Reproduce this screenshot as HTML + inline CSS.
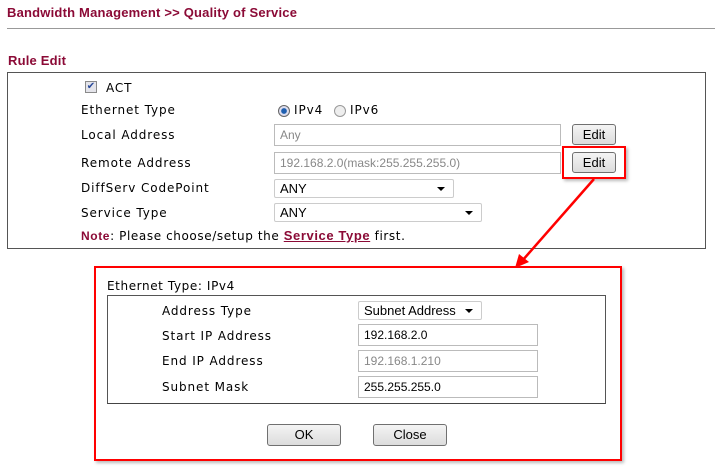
<!DOCTYPE html>
<html><head><style>
body{margin:0;width:715px;height:474px;background:#fff;position:relative;font-family:"DejaVu Sans",sans-serif;font-size:12px;color:#000;overflow:hidden}
.a{position:absolute;white-space:nowrap;letter-spacing:0.9px}
.t{font-family:"Liberation Sans",sans-serif;font-weight:bold;color:#8b0a36;font-size:13px;letter-spacing:0.2px}
.in{position:absolute;border:1px solid #bbb;background:#fff;box-sizing:border-box;font-family:"Liberation Sans",sans-serif;font-size:12px;padding:3px 5px;line-height:14px;color:#000}
.g{color:#888}
.btn{position:absolute;box-sizing:border-box;border:1px solid #707070;border-radius:3px;background:linear-gradient(#f4f4f4,#dcdcdc);text-align:center;font-family:"Liberation Sans",sans-serif;font-size:13px;line-height:19px}
.sel{position:absolute;box-sizing:border-box;border:1px solid #ccc;border-radius:2px;background:#fff;font-family:"Liberation Sans",sans-serif;font-size:13px;padding:1px 5px;line-height:15px}
.sel:after{content:"";position:absolute;right:8px;top:7px;border-left:4px solid transparent;border-right:4px solid transparent;border-top:4px solid #000}
</style></head><body>
<div class="a t" style="left:7px;top:5px">Bandwidth Management &gt;&gt; Quality of Service</div>
<div class="a" style="left:7px;top:28px;width:708px;height:1px;background:#999"></div>
<div class="a t" style="left:8px;top:53px">Rule Edit</div>
<div class="a" style="left:7px;top:72px;width:697px;height:175px;border:1px solid #555"></div>
<div class="a" style="left:85px;top:81px;width:12px;height:12px;border:1px solid #8a8a8a;background:#e4e4ea;box-sizing:border-box;font-size:10px;line-height:10px;color:#2a4a9a;text-align:center;letter-spacing:0">✔</div>
<div class="a" style="left:106px;top:81px">ACT</div>
<div class="a" style="left:81px;top:103px">Ethernet Type</div>
<div class="a" style="left:278px;top:105px;width:12px;height:12px;border-radius:50%;border:1px solid #666;box-sizing:border-box;background:radial-gradient(#1e5fb0 35%,#dde 45%)"></div>
<div class="a" style="left:294px;top:103px">IPv4</div>
<div class="a" style="left:334px;top:105px;width:12px;height:12px;border-radius:50%;border:1px solid #999;box-sizing:border-box;background:#eee"></div>
<div class="a" style="left:350px;top:103px">IPv6</div>
<div class="a" style="left:81px;top:128px">Local Address</div>
<div class="in g" style="left:274px;top:124px;width:287px;height:22px">Any</div>
<div class="btn" style="left:572px;top:124px;width:44px;height:21px">Edit</div>
<div class="a" style="left:81px;top:156px">Remote Address</div>
<div class="in g" style="left:274px;top:152px;width:287px;height:22px">192.168.2.0(mask:255.255.255.0)</div>
<div class="btn" style="left:572px;top:152px;width:44px;height:21px">Edit</div>
<div class="a" style="left:562px;top:146px;width:64px;height:33px;border:2px solid #f00;box-sizing:border-box;box-shadow:2px 2px 3px #bbb"></div>
<div class="a" style="left:81px;top:181px">DiffServ CodePoint</div>
<div class="sel" style="left:274px;top:179px;width:180px;height:19px">ANY</div>
<div class="a" style="left:81px;top:206px">Service Type</div>
<div class="sel" style="left:274px;top:203px;width:208px;height:19px">ANY</div>
<div class="a" style="left:81px;top:228px;letter-spacing:0.6px"><b style="color:#8b0a36;font-family:'Liberation Sans'">Note</b>: Please choose/setup the <b style="color:#8b0a36;text-decoration:underline;font-family:'Liberation Sans';font-size:13px">Service Type</b> first.</div>
<svg class="a" style="left:0;top:0" width="715" height="474"><line x1="594" y1="179" x2="522" y2="261" stroke="#f00" stroke-width="2.5"/><polygon points="515,268 519,254 529,262" fill="#f00"/></svg>
<div class="a" style="left:94px;top:266px;width:528px;height:195px;border:2px solid #f00;box-sizing:border-box;box-shadow:2px 2px 3px #bbb"></div>
<div class="a" style="left:107px;top:279px;letter-spacing:0.6px">Ethernet Type: IPv4</div>
<div class="a" style="left:107px;top:295px;width:497px;height:107px;border:1px solid #555;border-bottom-color:#444"></div>
<div class="a" style="left:162px;top:304px">Address Type</div>
<div class="sel" style="left:358px;top:301px;width:124px;height:19px">Subnet Address</div>
<div class="a" style="left:162px;top:329px">Start IP Address</div>
<div class="in" style="left:358px;top:324px;width:180px;height:22px">192.168.2.0</div>
<div class="a" style="left:162px;top:354px">End IP Address</div>
<div class="in g" style="left:358px;top:350px;width:180px;height:22px">192.168.1.210</div>
<div class="a" style="left:162px;top:380px">Subnet Mask</div>
<div class="in" style="left:358px;top:376px;width:180px;height:22px">255.255.255.0</div>
<div class="btn" style="left:267px;top:424px;width:74px;height:22px">OK</div>
<div class="btn" style="left:373px;top:424px;width:74px;height:22px">Close</div>
</body></html>
